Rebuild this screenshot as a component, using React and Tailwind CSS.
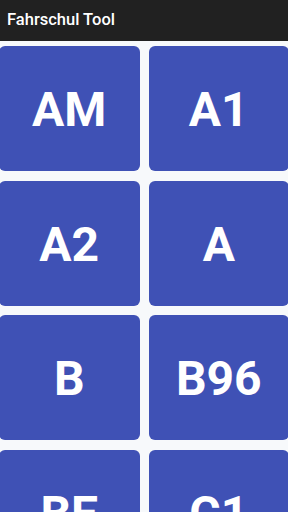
const classes = ["AM", "A1", "A2", "A", "B", "B96", "BE", "C1"];

export default function App() {
    return (
        <div className="h-screen overflow-hidden flex flex-col bg-[#f7f9fb]" style={{fontFamily: "Roboto, 'Liberation Sans', sans-serif"}}>
            <div className="h-[41px] shrink-0 bg-[#212121] flex items-center px-[7px]">
                <span className="text-white text-[16.5px] font-medium">Fahrschul Tool</span>
            </div>
            <div className="flex-1 overflow-hidden">
                <div className="grid grid-cols-2 gap-x-[9px] gap-y-[9.5px] pt-[5px] -mx-[1px]">
                    {classes.map(c => (
                        <div key={c}
                             className="h-[125px] rounded-[6px] bg-[#3f51b5] flex items-center justify-center">
                            <span className="text-white text-[48px] font-bold leading-none pt-[3px]">{c}</span>
                        </div>
                    ))}
                </div>
            </div>
        </div>
    );
}
